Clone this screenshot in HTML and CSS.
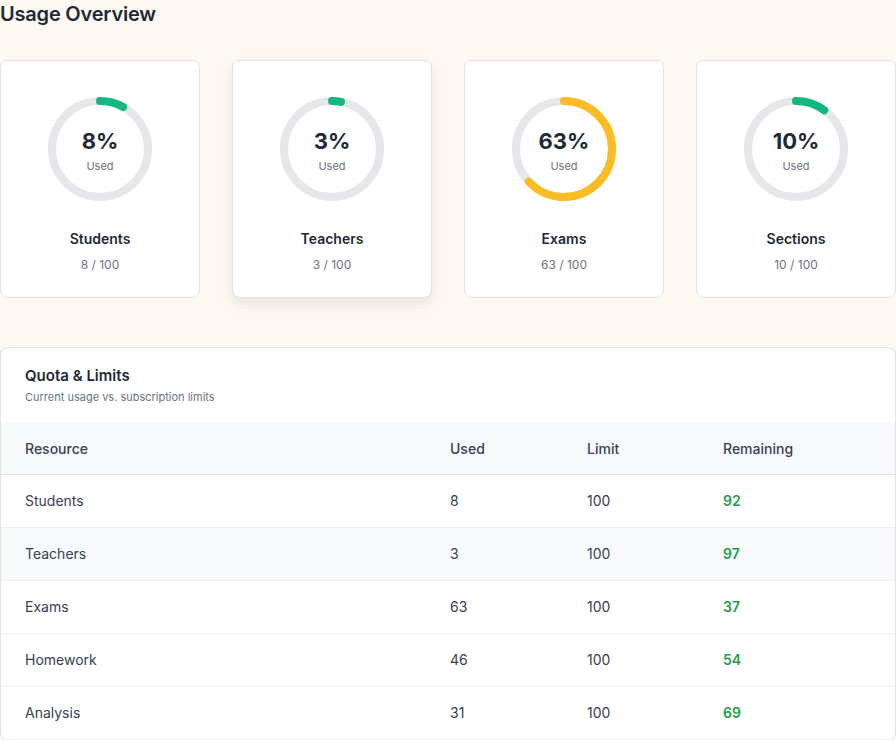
FILE: index.html
```html
<!DOCTYPE html>
<html lang="en">
<head>
  <meta charset="UTF-8">
  <meta name="viewport" content="width=device-width, initial-scale=1.0">
  <title>Usage Overview</title>
  <link rel="stylesheet" href="styles.css">
</head>
<body>
  <div class="page">
    <h1>Usage Overview</h1>

    <div class="usage-grid">
      <div class="usage-card">
        <div class="ring">
          <svg width="104" height="104" viewBox="0 0 104 104">
            <circle class="track" cx="52" cy="52" r="48" />
            <circle class="bar ok" cx="52" cy="52" r="48" stroke-dasharray="24.13 301.59" />
          </svg>
          <div class="ring-label">
            <span class="pct">8%</span>
            <span class="used">Used</span>
          </div>
        </div>
        <div class="usage-name">Students</div>
        <div class="usage-count">8 / 100</div>
      </div>

      <div class="usage-card raised">
        <div class="ring">
          <svg width="104" height="104" viewBox="0 0 104 104">
            <circle class="track" cx="52" cy="52" r="48" />
            <circle class="bar ok" cx="52" cy="52" r="48" stroke-dasharray="9.05 301.59" />
          </svg>
          <div class="ring-label">
            <span class="pct">3%</span>
            <span class="used">Used</span>
          </div>
        </div>
        <div class="usage-name">Teachers</div>
        <div class="usage-count">3 / 100</div>
      </div>

      <div class="usage-card">
        <div class="ring">
          <svg width="104" height="104" viewBox="0 0 104 104">
            <circle class="track" cx="52" cy="52" r="48" />
            <circle class="bar warn" cx="52" cy="52" r="48" stroke-dasharray="190.0 301.59" />
          </svg>
          <div class="ring-label">
            <span class="pct">63%</span>
            <span class="used">Used</span>
          </div>
        </div>
        <div class="usage-name">Exams</div>
        <div class="usage-count">63 / 100</div>
      </div>

      <div class="usage-card">
        <div class="ring">
          <svg width="104" height="104" viewBox="0 0 104 104">
            <circle class="track" cx="52" cy="52" r="48" />
            <circle class="bar ok" cx="52" cy="52" r="48" stroke-dasharray="30.16 301.59" />
          </svg>
          <div class="ring-label">
            <span class="pct">10%</span>
            <span class="used">Used</span>
          </div>
        </div>
        <div class="usage-name">Sections</div>
        <div class="usage-count">10 / 100</div>
      </div>
    </div>

    <div class="quota-card">
      <div class="quota-head">
        <h2>Quota &amp; Limits</h2>
        <p>Current usage vs. subscription limits</p>
      </div>
      <table class="quota-table">
        <colgroup>
          <col class="col-resource">
          <col class="col-used">
          <col class="col-limit">
          <col class="col-remaining">
        </colgroup>
        <thead>
          <tr>
            <th>Resource</th>
            <th>Used</th>
            <th>Limit</th>
            <th>Remaining</th>
          </tr>
        </thead>
        <tbody>
          <tr><td>Students</td><td>8</td><td>100</td><td class="left">92</td></tr>
          <tr class="hover"><td>Teachers</td><td>3</td><td>100</td><td class="left">97</td></tr>
          <tr><td>Exams</td><td>63</td><td>100</td><td class="left">37</td></tr>
          <tr><td>Homework</td><td>46</td><td>100</td><td class="left">54</td></tr>
          <tr><td>Analysis</td><td>31</td><td>100</td><td class="left">69</td></tr>
        </tbody>
      </table>
    </div>
  </div>
</body>
</html>
```

FILE: styles.css
```css
body {
  margin: 0;
  background: #fdf8f1;
  font-family: 'Inter', 'Noto Sans', sans-serif;
  color: #1f2937;
}
.page {
  width: 896px;
}
h1 {
  margin: 0;
  font-size: 20px;
  line-height: 28px;
  font-weight: 600;
  letter-spacing: -0.2px;
  color: #1f2937;
}

/* usage cards */
.usage-grid {
  display: grid;
  grid-template-columns: repeat(4, 200px);
  gap: 32px;
  margin-top: 32px;
}
.usage-card {
  background: white;
  border: 1px solid #e3e3e3;
  border-radius: 8px;
  padding: 36px 0 24px;
  display: flex;
  flex-direction: column;
  align-items: center;
}
.usage-card.raised {
  box-shadow: 0 6px 14px rgba(0,0,0,0.09);
}
.ring {
  position: relative;
  width: 104px;
  height: 104px;
}
.ring svg {
  display: block;
  transform: rotate(-90deg);
}
.ring circle {
  fill: none;
  stroke-width: 8;
}
.ring .track {
  stroke: #e5e7eb;
}
.ring .bar {
  stroke-linecap: round;
}
.ring .bar.ok {
  stroke: #12b97f;
}
.ring .bar.warn {
  stroke: #fbbd23;
}
.ring-label {
  position: absolute;
  inset: 0;
  display: flex;
  flex-direction: column;
  align-items: center;
  justify-content: center;
  padding-top: 2px;
}
.pct {
  font-size: 22px;
  line-height: 28px;
  font-weight: 700;
  color: #1f2937;
}
.used {
  font-size: 11px;
  line-height: 16px;
  color: #6b7280;
  margin-top: 3px;
}
.usage-name {
  margin-top: 28px;
  font-size: 14px;
  line-height: 20px;
  font-weight: 600;
  color: #1f2937;
}
.usage-count {
  margin-top: 8px;
  font-size: 12px;
  line-height: 16px;
  color: #6b7280;
}

/* quota table */
.quota-card {
  margin-top: 49px;
  background: white;
  border: 1px solid #e3e3e3;
  border-radius: 8px;
  overflow: hidden;
}
.quota-head {
  padding: 18px 24px 18px;
}
.quota-head h2 {
  margin: 0;
  font-size: 15px;
  line-height: 20px;
  font-weight: 600;
  color: #1f2937;
}
.quota-head p {
  margin: 3px 0 0;
  font-size: 11px;
  line-height: 16px;
  color: #6b7280;
}
.quota-table {
  width: 100%;
  border-collapse: collapse;
  table-layout: fixed;
}
.col-resource { width: 425px; }
.col-used { width: 137px; }
.col-limit { width: 136px; }
.col-remaining { width: 196px; }
.quota-table th,
.quota-table td {
  text-align: left;
  padding: 0 24px;
  font-size: 14px;
  line-height: 20px;
}
.quota-table th {
  height: 51px;
  background: #f8f9fb;
  font-weight: 500;
  color: #374151;
  border-bottom: 1px solid #dfe1e5;
}
.quota-table td {
  height: 52px;
  color: #374151;
  border-bottom: 1px solid #eef0f2;
}
.quota-table tr.hover td {
  background: #f8f9fb;
}
.quota-table td.left {
  color: #1f9d4c;
  font-weight: 600;
}
```
